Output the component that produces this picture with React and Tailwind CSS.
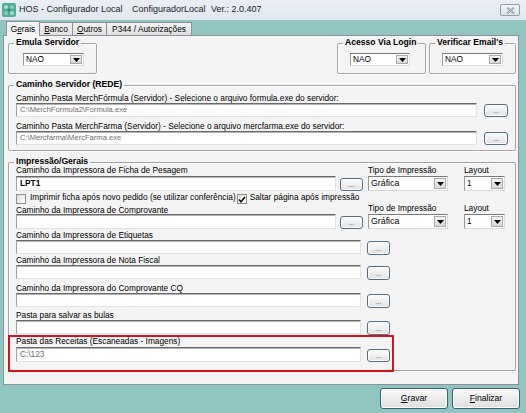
import React from 'react';

const Arrow = () => (
  <svg width="7" height="4" viewBox="0 0 7 4">
    <path d="M0 0h7L3.5 4z" fill="#000" />
  </svg>
);

const Select = ({ value, className = '' }) => (
  <div className={`flex items-stretch bg-white border border-t-[#7a7a7a] border-l-[#9a9a9a] border-r-[#dadada] border-b-[#dadada] ${className}`}>
    <span className="flex-1 flex items-center pl-[2px] whitespace-nowrap overflow-hidden">{value}</span>
    <span className="w-[12px] my-[1px] mr-[1px] flex items-center justify-center bg-linear-to-b from-[#f4f4f4] to-[#d8d8d8] border border-[#a9a9a9]">
      <Arrow />
    </span>
  </div>
);

const Input = ({ children, className = '' }) => (
  <div className={`flex items-center bg-white border border-t-[#6a6a6a] border-l-[#a0a0a0] border-r-[#e2e2e2] border-b-[#e2e2e2] shadow-[inset_0_1px_0_#b4b4b4] px-[3px] whitespace-nowrap overflow-hidden ${className}`}>
    {children}
  </div>
);

const Dots = ({ className = '' }) => (
  <div className={`flex items-end justify-center pb-[2px] rounded-[3px] border border-[#4f6e8a] bg-linear-to-b from-[#fcfcfc] to-[#e2e2e2] shadow-[inset_0_0_0_1px_#ffffff] text-[7px] text-[#555] leading-none ${className}`}>
    ...
  </div>
);

const Check = ({ checked }) => (
  <div className="w-[10px] h-[10px] mt-[2px] shrink-0 border border-[#8e8f8f] bg-linear-to-br from-[#dedede] to-white flex items-center justify-center">
    {checked && (
      <svg width="8" height="7" viewBox="0 0 8 7">
        <path d="M1 3.5l2 2.2L7 1" stroke="#111" strokeWidth="1.6" fill="none" />
      </svg>
    )}
  </div>
);

const Label = ({ children, className = '' }) => (
  <div className={`h-[10px] leading-[10px] whitespace-nowrap ${className}`}>{children}</div>
);

const Group = ({ title, className = '', children }) => (
  <div className={`border border-[#a3a3a3] rounded-[2px] shadow-[inset_1px_1px_0_#ffffff,1px_1px_0_#ffffff] ${className}`}>
    <div className="-mt-[8px] ml-[5px] px-[2px] w-fit h-[12px] leading-[12px] bg-[#f4f4f4] font-bold text-[8.6px] whitespace-nowrap">
      {title}
    </div>
    {children}
  </div>
);

const PathRow = ({ label, className = '' }) => (
  <div className={className}>
    <Label>{label}</Label>
    <div className="h-[14px] flex items-start">
      <Input className="w-[345px] h-[14px]" />
      <Dots className="ml-[6px] mt-[1px] w-[23px] h-[14px]" />
    </div>
  </div>
);

const Tab = ({ active, className = '', children }) => (
  <div
    className={
      active
        ? `relative z-10 h-[15px] -mb-[1px] flex items-center justify-center whitespace-nowrap bg-[#f4f4f4] border border-b-0 border-[#8d9096] ${className}`
        : `h-[13px] flex items-center justify-center whitespace-nowrap bg-linear-to-b from-[#f3f3f3] to-[#e1e1e1] border border-b-0 border-l-0 border-[#8d9096] ${className}`
    }
  >
    {children}
  </div>
);

const BigButton = ({ children }) => (
  <div className="w-[68px] h-[21px] rounded-[3px] border border-[#3d6079] bg-linear-to-b from-[#fafafa] to-[#dedede] shadow-[inset_0_0_0_1px_#ffffff] flex items-center justify-center text-[8.6px]">
    {children}
  </div>
);

export default function App() {
  return (
    <div className="w-[526px] h-[413px] overflow-hidden bg-[#90c5c1] text-black text-[8.3px] font-['Liberation_Sans',Arial,sans-serif]">
      {/* title bar */}
      <div className="h-[20px] flex items-center pl-[2px] bg-linear-to-b from-[#eaeff4] to-[#dfe7ee]">
        <svg width="14" height="14" viewBox="0 0 14 14">
          <rect x="0" y="0" width="14" height="14" rx="2" fill="#4fae98" />
          <circle cx="4" cy="4" r="2" fill="#a8e0cf" />
          <circle cx="10" cy="4" r="2" fill="#86cdb8" />
          <circle cx="4" cy="10" r="2" fill="#86cdb8" />
          <circle cx="10" cy="10" r="2" fill="#a8e0cf" />
          <circle cx="7" cy="7" r="1.5" fill="#2f8a74" />
        </svg>
        <div className="ml-[3px] flex text-[9px] text-[#222]">
          <span className="w-[113px]">HOS - Configurador Local</span>
          <span className="w-[79px]">ConfiguradorLocal</span>
          <span>Ver.: 2.0.407</span>
        </div>
        <div className="ml-auto mr-[6px] w-[20px] h-[12px] rounded-[2px] border border-[#8f9caa] bg-linear-to-b from-[#f4f6f8] to-[#dfe4ea] flex items-center justify-center">
          <svg width="9" height="7" viewBox="0 0 9 7">
            <path d="M1 0.5l7 6M8 0.5l-7 6" stroke="#7f8b98" strokeWidth="1.8" />
            <path d="M1 0.5l7 6M8 0.5l-7 6" stroke="#f2f4f6" strokeWidth="0.6" />
          </svg>
        </div>
      </div>

      {/* tabs */}
      <div className="h-[15px] flex items-end pl-[6px]">
        <Tab active className="w-[34px]">
          <span>G<span className="underline">e</span>rais</span>
        </Tab>
        <Tab className="w-[33px]">
          <span><span className="underline">B</span>anco</span>
        </Tab>
        <Tab className="w-[34px]">
          <span><span className="underline">O</span>utros</span>
        </Tab>
        <Tab className="w-[85px]">P344 / Autorizações</Tab>
      </div>

      {/* main panel */}
      <div className="ml-[3px] w-[516px] h-[350px] border border-[#8d9096] bg-[#f4f4f4] pl-[4px] pr-[2px]">
        {/* row 1 */}
        <div className="mt-[7px] flex">
          <Group title="Emula Servidor" className="w-[89px] h-[31px]">
            <Select value="NAO" className="ml-[14px] mt-[5px] w-[61px] h-[13px]" />
          </Group>
          <Group title="Acesso Via Login" className="ml-auto w-[89px] h-[31px]">
            <Select value="NAO" className="ml-[12px] mt-[5px] w-[60px] h-[13px]" />
          </Group>
          <Group title="Verificar Email's" className="ml-[3px] w-[87px] h-[31px]">
            <Select value="NAO" className="ml-[12px] mt-[5px] w-[61px] h-[13px]" />
          </Group>
        </div>

        {/* caminho servidor */}
        <Group title="Caminho Servidor (REDE)" className="mt-[11px] h-[66px]">
          <div className="px-[7px]">
            <Label className="mt-[3px]">
              Caminho Pasta MerchFórmula (Servidor) - Selecione o arquivo formula.exe do servidor:
            </Label>
            <div className="flex items-start">
              <Input className="w-[462px] h-[14px] text-[7.6px] text-[#6d6d6d]">{'C:\\MerchFormula2\\Formula.exe'}</Input>
              <Dots className="ml-[7px] mt-[1px] w-[24px] h-[13px]" />
            </div>
            <Label className="mt-[4px]">
              Caminho Pasta MerchFarma (Servidor) - Selecione o arquivo mercfarma.exe do servidor:
            </Label>
            <div className="flex items-start">
              <Input className="w-[462px] h-[14px] text-[7.6px] text-[#6d6d6d]">{'C:\\Mercfarma\\MercFarma.exe'}</Input>
              <Dots className="ml-[7px] mt-[1px] w-[24px] h-[13px]" />
            </div>
          </div>
        </Group>

        {/* impressao / gerais */}
        <Group title="Impressão/Gerais" className="mt-[11px] h-[209px]">
          <div className="px-[7px]">
            {/* row A */}
            <div className="-mt-[2px] flex">
              <div>
                <Label>Caminho da Impressora de Ficha de Pesagem</Label>
                <div className="mt-[1px] flex items-start">
                  <Input className="w-[320px] h-[15px] font-bold">LPT1</Input>
                  <Dots className="ml-[4px] mt-[2px] w-[23px] h-[13px]" />
                </div>
              </div>
              <div className="ml-[5px] w-[80px]">
                <Label>Tipo de Impressão</Label>
                <Select value="Gráfica" className="mt-[1px] w-[80px] h-[15px] text-[8.8px]" />
              </div>
              <div className="ml-[16px] w-[41px]">
                <Label>Layout</Label>
                <Select value="1" className="mt-[1px] w-[41px] h-[15px]" />
              </div>
            </div>

            {/* row B */}
            <div className="mt-[1px] h-[11px] flex items-start">
              <Check />
              <span className="ml-[4px] leading-[10px] whitespace-nowrap">
                Imprimir ficha após novo pedido (se utilizar conferência)
              </span>
              <div className="ml-[1px]">
                <Check checked />
              </div>
              <span className="ml-[3px] leading-[10px] whitespace-nowrap">Saltar página após impressão</span>
            </div>

            {/* row C */}
            <div className="flex">
              <div>
                <Label className="mt-[2px]">Caminho da Impressora de Comprovante</Label>
                <div className="-mt-[1px] flex items-start">
                  <Input className="w-[320px] h-[15px]" />
                  <Dots className="ml-[4px] mt-[2px] w-[23px] h-[13px]" />
                </div>
              </div>
              <div className="ml-[5px] w-[80px]">
                <Label>Tipo de Impressão</Label>
                <Select value="Gráfica" className="mt-[1px] w-[80px] h-[15px] text-[8.8px]" />
              </div>
              <div className="ml-[16px] w-[41px]">
                <Label>Layout</Label>
                <Select value="1" className="mt-[1px] w-[41px] h-[15px]" />
              </div>
            </div>

            <PathRow className="mt-[1px]" label="Caminho da Impressora de Etiquetas" />
            <PathRow className="mt-[1px]" label="Caminho da Impressora de Nota Fiscal" />
            <PathRow className="mt-[4px]" label="Caminho da Impressora do Comprovante CQ" />
            <PathRow className="mt-[3px]" label="Pasta para salvar as bulas" />

            {/* highlighted */}
            <div className="mt-[1px] -ml-[8px] w-[386px] h-[37px] border-2 border-[#d3131c] pl-[6px]">
              <Label className="-mt-[1px]">Pasta das Receitas (Escaneadas - Imagens)</Label>
              <div className="mt-[1px] flex items-start">
                <Input className="w-[345px] h-[15px] text-[#6d6d6d]">{'C:\\123'}</Input>
                <Dots className="ml-[6px] mt-[2px] w-[23px] h-[13px]" />
              </div>
            </div>
          </div>
        </Group>
      </div>

      {/* bottom buttons */}
      <div className="mt-[3px] pr-[6px] flex justify-end gap-[4px]">
        <BigButton>
          <span><span className="underline">G</span>ravar</span>
        </BigButton>
        <BigButton>
          <span><span className="underline">F</span>inalizar</span>
        </BigButton>
      </div>
    </div>
  );
}
